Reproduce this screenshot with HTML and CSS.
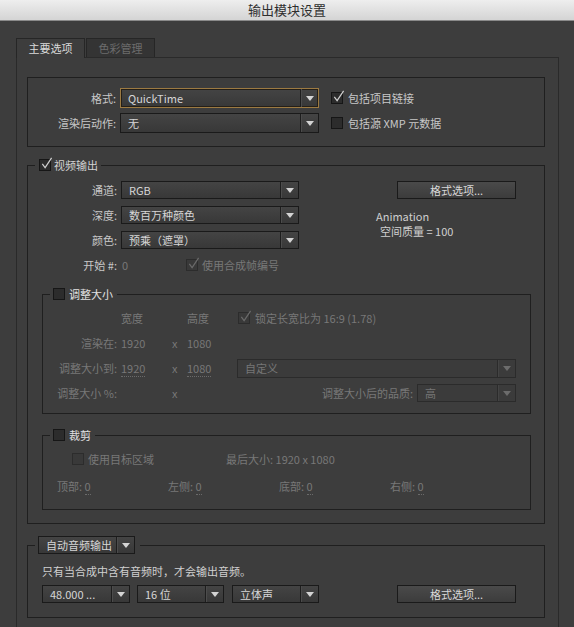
FILE: index.html
```html
<!DOCTYPE html>
<html lang="zh">
<head>
    <meta charset="UTF-8">
    <title>输出模块设置</title>
    <link rel="stylesheet" href="styles.css">
</head>
<body>
    <div class="titlebar">输出模块设置</div>

    <div class="tabs">
        <div class="tab active">主要选项</div>
        <div class="tab">色彩管理</div>
    </div>

    <div class="panel">
        <!-- 格式 -->
        <div class="box">
            <div class="row">
                <span class="lbl lbl-fmt">格式:</span>
                <div class="select focus sel-fmt"><span class="val">QuickTime</span><span class="arrow"></span></div>
                <span class="cb checked cb-fmt"><svg viewBox="0 0 14 14"><path d="M2.5 7.5 L5.5 11.5 L12.5 1"/></svg></span>
                <span class="cb-text">包括项目链接</span>
            </div>
            <div class="row">
                <span class="lbl lbl-fmt">渲染后动作:</span>
                <div class="select sel-fmt"><span class="val">无</span><span class="arrow"></span></div>
                <span class="cb cb-fmt"></span>
                <span class="cb-text">包括源 XMP 元数据</span>
            </div>
        </div>

        <!-- 视频输出 -->
        <fieldset class="video">
            <legend>
                <span class="cb checked"><svg viewBox="0 0 14 14"><path d="M2.5 7.5 L5.5 11.5 L12.5 1"/></svg></span>
                <span class="legend-text">视频输出</span>
            </legend>
            <div class="video-top">
                <div class="video-left">
                    <div class="row">
                        <span class="lbl lbl-video">通道:</span>
                        <div class="select sel-video"><span class="val">RGB</span><span class="arrow"></span></div>
                    </div>
                    <div class="row">
                        <span class="lbl lbl-video">深度:</span>
                        <div class="select sel-video"><span class="val">数百万种颜色</span><span class="arrow"></span></div>
                    </div>
                    <div class="row">
                        <span class="lbl lbl-video">颜色:</span>
                        <div class="select sel-video"><span class="val">预乘（遮罩）</span><span class="arrow"></span></div>
                    </div>
                    <div class="row">
                        <span class="lbl lbl-video">开始 #:</span>
                        <span class="start-val dim">0</span>
                        <span class="cb checked disabled"><svg viewBox="0 0 14 14"><path d="M2.5 7.5 L5.5 11.5 L12.5 1"/></svg></span>
                        <span class="cb-text dim">使用合成帧编号</span>
                    </div>
                </div>
                <div class="video-right">
                    <div class="btn btn-opts">格式选项...</div>
                    <div class="info">Animation<br><span class="info-2">空间质量 = 100</span></div>
                </div>
            </div>

            <!-- 调整大小 -->
            <fieldset class="resize">
                <legend>
                    <span class="cb"></span>
                    <span class="legend-text bright">调整大小</span>
                </legend>
                <div class="rows">
                    <div class="row dim">
                        <span class="lbl lbl-resize"></span>
                        <span class="c1">宽度</span>
                        <span class="cx"></span>
                        <span class="c2">高度</span>
                        <span class="cb checked disabled cb-lock"><svg viewBox="0 0 14 14"><path d="M2.5 7.5 L5.5 11.5 L12.5 1"/></svg></span>
                        <span class="cb-text">锁定长宽比为 16:9 (1.78)</span>
                    </div>
                    <div class="row dim">
                        <span class="lbl lbl-resize">渲染在:</span>
                        <span class="c1">1920</span>
                        <span class="cx">x</span>
                        <span class="c2">1080</span>
                    </div>
                    <div class="row dim">
                        <span class="lbl lbl-resize">调整大小到:</span>
                        <span class="c1"><span class="ul">1920</span></span>
                        <span class="cx">x</span>
                        <span class="c2"><span class="ul">1080</span></span>
                        <div class="select disabled sel-grow"><span class="val">自定义</span><span class="arrow"></span></div>
                    </div>
                    <div class="row dim">
                        <span class="lbl lbl-resize">调整大小 %:</span>
                        <span class="c1"></span>
                        <span class="cx">x</span>
                        <span class="c2"></span>
                        <span class="quality-lbl">调整大小后的品质:</span>
                        <div class="select disabled sel-quality"><span class="val">高</span><span class="arrow"></span></div>
                    </div>
                </div>
            </fieldset>

            <!-- 裁剪 -->
            <fieldset class="crop">
                <legend>
                    <span class="cb"></span>
                    <span class="legend-text bright">裁剪</span>
                </legend>
                <div class="rows crop-rows">
                    <div class="row dim crop-r1">
                        <span class="crop-area">
                            <span class="cb disabled"></span>
                            <span class="cb-text">使用目标区域</span>
                        </span>
                        <span>最后大小: 1920 x 1080</span>
                    </div>
                    <div class="row dim crop-r2">
                        <span class="crop-side">顶部: <span class="ul">0</span></span>
                        <span class="crop-side">左侧: <span class="ul">0</span></span>
                        <span class="crop-side">底部: <span class="ul">0</span></span>
                        <span class="crop-side">右侧: <span class="ul">0</span></span>
                    </div>
                </div>
            </fieldset>
        </fieldset>

        <!-- 音频 -->
        <fieldset class="audio">
            <legend>
                <div class="select sel-audio-mode"><span class="val">自动音频输出</span><span class="arrow"></span></div>
            </legend>
            <div class="audio-body">
                <div class="audio-note">只有当合成中含有音频时，才会输出音频。</div>
                <div class="row audio-row">
                    <div class="select sel-rate"><span class="val">48.000 ...</span><span class="arrow"></span></div>
                    <div class="select sel-bits"><span class="val">16 位</span><span class="arrow"></span></div>
                    <div class="select sel-chan"><span class="val">立体声</span><span class="arrow"></span></div>
                    <div class="btn btn-opts btn-audio">格式选项...</div>
                </div>
            </div>
        </fieldset>
    </div>
</body>
</html>
```

FILE: styles.css
```css
/* base */
body {
    margin: 0;
    width: 574px;
    height: 627px;
    overflow: hidden;
    background-color: #3d3d3d;
    font-family: "Noto Sans CJK SC", "Noto Sans", sans-serif;
    font-size: 11px;
    line-height: 14px;
    color: #c8c8c8;
}

.titlebar {
    height: 20px;
    line-height: 20px;
    border-bottom: 1px solid #8a8a8a;
    background: linear-gradient(#eeeeee, #d4d4d4);
    color: #2e2e2e;
    font-size: 13px;
    text-align: center;
}

/* tabs */
.tabs {
    display: flex;
    gap: 1px;
    height: 19px;
    margin: 17px 0 0 16px;
    position: relative;
    z-index: 1;
}

.tab {
    width: 69px;
    height: 19px;
    box-sizing: border-box;
    border: 1px solid #262626;
    border-bottom: none;
    background-color: #343434;
    color: #6c6c6c;
    text-align: center;
    line-height: 18px;
}

.tab.active {
    height: 20px;
    background-color: #3d3d3d;
    color: #dadada;
}

.panel {
    margin-left: 16px;
    width: 543px;
    height: 590px;
    box-sizing: border-box;
    border: 1px solid #2a2a2a;
    padding: 19px 0 0 10px;
}

/* common bits */
.row {
    display: flex;
    align-items: center;
    height: 18px;
    white-space: nowrap;
}

.lbl {
    flex: none;
    text-align: right;
    margin-right: 4px;
}

.dim {
    color: #787878;
}

.ul {
    border-bottom: 1px dotted #6a6a6a;
    line-height: 12px;
}

.select {
    display: flex;
    align-items: center;
    flex: none;
    height: 18px;
    box-sizing: border-box;
    border: 1px solid #1a1a1a;
    background: linear-gradient(#444444, #383838);
    color: #d6d6d6;
}

.select .val {
    flex: 1;
    padding-left: 7px;
    overflow: hidden;
}

.select .arrow {
    width: 17px;
    height: 100%;
    border-left: 1px solid #1e1e1e;
    box-shadow: inset 1px 0 0 #4c4c4c;
    display: flex;
    align-items: center;
    justify-content: center;
}

.select .arrow::after {
    content: "";
    border-left: 4px solid transparent;
    border-right: 4px solid transparent;
    border-top: 5px solid #d4d4d4;
    margin-top: 1px;
}

.select.focus {
    border-color: #9c7a42;
    box-shadow: inset 0 0 0 1px #241f18;
}

.select.disabled {
    border-color: #2b2b2b;
    background: #3b3b3b;
    color: #767676;
}

.select.disabled .arrow {
    border-left-color: #2b2b2b;
    box-shadow: inset 1px 0 0 #444;
}

.select.disabled .arrow::after {
    border-top-color: #6c6c6c;
}

.btn {
    flex: none;
    height: 18px;
    box-sizing: border-box;
    border: 1px solid #1a1a1a;
    background: linear-gradient(#4a4a4a, #3c3c3c);
    color: #d8d8d8;
    text-align: center;
    line-height: 16px;
}

.cb {
    position: relative;
    flex: none;
    display: inline-block;
    width: 12px;
    height: 12px;
    box-sizing: border-box;
    border: 1px solid #161616;
    background-color: #2c2c2c;
}

.cb svg {
    position: absolute;
    left: 0;
    top: -3px;
    width: 13px;
    height: 13px;
    fill: none;
    stroke: #cfcfcf;
    stroke-width: 1.3;
}

.cb.disabled {
    border-color: #2c2c2c;
    background-color: #393939;
}

.cb.disabled svg {
    stroke: #6a6a6a;
}

.cb-text {
    margin-left: 4px;
}

/* fieldsets */
fieldset {
    margin: 0;
    min-inline-size: 0;
    box-sizing: border-box;
    border: 1px solid #1f1f1f;
}

legend {
    display: flex;
    align-items: center;
    height: 14px;
}

.legend-text {
    margin-left: 3px;
    color: #d2d2d2;
}

.legend-text.bright {
    margin-left: 4px;
    color: #e2e2e2;
}

/* 格式 */
.box {
    width: 518px;
    height: 70px;
    box-sizing: border-box;
    border: 1px solid #1f1f1f;
    padding-top: 10px;
    display: flex;
    flex-direction: column;
    gap: 5px;
}

.box .row {
    height: 20px;
}

.box .select {
    height: 20px;
}

.lbl-fmt {
    width: 88px;
}

.sel-fmt {
    width: 199px;
}

.cb-fmt {
    margin-left: 12px;
}

.box .cb-text {
    margin-left: 5px;
}

/* 视频输出 */
.video {
    width: 518px;
    margin-top: 11px;
    padding: 9px 13px 13px 0;
}

.video > legend {
    margin-left: 7px;
    padding: 0 3px 0 4px;
}

.video-top {
    display: flex;
}

.video-left {
    display: flex;
    flex-direction: column;
    gap: 7px;
}

.lbl-video {
    width: 89px;
}

.sel-video {
    width: 178px;
}

.start-val {
    width: 64px;
    padding-left: 1px;
}

.video-right {
    margin-left: 77px;
}

.btn-opts {
    width: 119px;
    margin-left: 21px;
}

.info {
    margin-top: 10px;
    line-height: 15px;
    color: #cfcfcf;
}

.info-2 {
    padding-left: 4px;
}

/* 调整大小 / 裁剪 */
.resize,
.crop {
    width: 489px;
    margin-left: 14px;
}

.resize {
    margin-top: 13px;
    padding: 8px 14px 11px 0;
}

.crop {
    margin-top: 14px;
    padding: 8px 14px 14px 0;
}

.resize > legend,
.crop > legend {
    margin-left: 7px;
    padding: 0 4px 0 3px;
}

.rows {
    display: flex;
    flex-direction: column;
    gap: 7px;
}

.lbl-resize {
    width: 74px;
}

.c1 {
    width: 46px;
    flex: none;
}

.cx {
    width: 15px;
    padding-left: 5px;
    flex: none;
}

.c2 {
    width: 50px;
    flex: none;
}

.cb-lock {
    margin-left: 1px;
}

.cb-lock + .cb-text {
    margin-left: 5px;
}

.sel-grow {
    flex: 1;
    height: 19px;
}

.quality-lbl {
    margin-left: auto;
    margin-right: 4px;
}

.sel-quality {
    width: 99px;
}

.crop-rows {
    gap: 9px;
}

.crop-r1 {
    padding-left: 29px;
}

.crop-area {
    display: flex;
    align-items: center;
    width: 154px;
}

.crop-r2 {
    padding-left: 14px;
}

.crop-side {
    width: 111px;
}

/* 音频 */
.audio {
    width: 518px;
    margin-top: 12px;
    padding: 10px 13px 14px 0;
}

.audio > legend {
    height: 18px;
    margin-left: 7px;
    padding: 0 5px 0 3px;
}

.sel-audio-mode {
    width: 97px;
}

.audio-body {
    padding-left: 14px;
}

.audio-note {
    color: #d0d0d0;
}

.audio-row {
    margin-top: 7px;
}

.sel-rate {
    width: 88px;
}

.sel-bits {
    width: 87px;
    margin-left: 7px;
}

.sel-chan {
    width: 87px;
    margin-left: 8px;
}

.btn-audio {
    margin-left: 78px;
}
```
